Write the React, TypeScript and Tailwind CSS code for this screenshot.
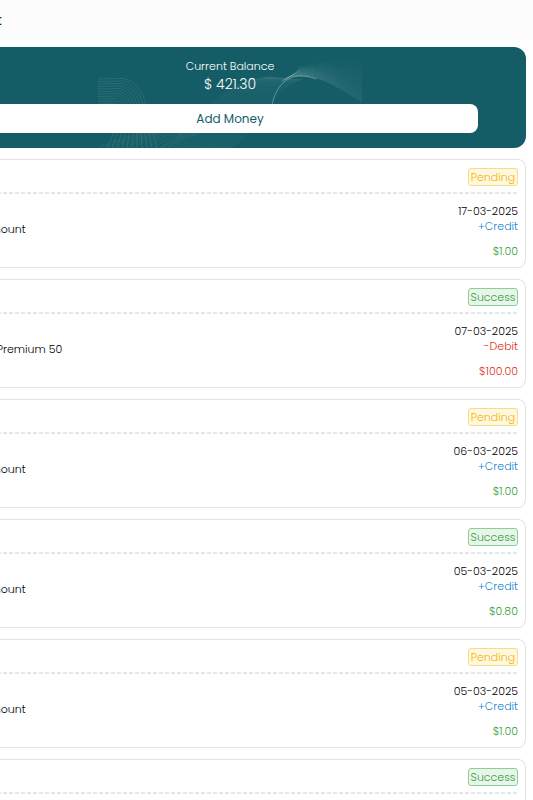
import clsx from 'clsx';

type Transaction = {
  id: number;
  title: string;
  status: 'Pending' | 'Success';
  date: string;
  type: 'Credit' | 'Debit';
  amount: string;
};

const transactions: Transaction[] = [
  { id: 1, title: 'Added Amount', status: 'Pending', date: '17-03-2025', type: 'Credit', amount: '$1.00' },
  { id: 2, title: 'Purchase Premium 50', status: 'Success', date: '07-03-2025', type: 'Debit', amount: '$100.00' },
  { id: 3, title: 'Added Amount', status: 'Pending', date: '06-03-2025', type: 'Credit', amount: '$1.00' },
  { id: 4, title: 'Added Amount', status: 'Success', date: '05-03-2025', type: 'Credit', amount: '$0.80' },
  { id: 5, title: 'Added Amount', status: 'Pending', date: '05-03-2025', type: 'Credit', amount: '$1.00' },
  { id: 6, title: 'Added Amount', status: 'Success', date: '05-03-2025', type: 'Credit', amount: '$1.00' },
];

// Thin line art behind the balance
function BalanceWaves() {
  const rings = Array.from({ length: 11 }, (_, i) => i);
  const lines = Array.from({ length: 24 }, (_, i) => i);

  return (
    <svg
      viewBox="0 0 264 101"
      className="pointer-events-none absolute inset-y-0 left-1/2 h-full w-[264px] -translate-x-1/2"
      fill="none"
      stroke="#ffffff"
      strokeWidth="0.5"
      aria-hidden="true"
    >
      {/* left loop */}
      {rings.map((i) => (
        <path
          key={`ring-${i}`}
          opacity="0.2"
          d={`M0 ${32 + i * 2.5} L${22 - i * 0.6} ${31.5 + i * 2.5} C${36 - i * 2} ${31 + i * 2.5} ${44 - i * 2.6} ${44 + i * 1.6} ${48 - i * 3} 58 C${52 - i * 3} 72 ${55 - i * 4} 88 ${59 - i * 5} 101`}
        />
      ))}
      {rings.map((i) => (
        <path key={`cross-${i}`} opacity="0.14" d={`M${i * 7} 101 C${16 + i * 6} 94 ${34 + i * 6} 88 ${50 + i * 6} 84`} />
      ))}
      {/* rising sheet, its right edge follows the crest */}
      {lines.map((i) => (
        <path
          key={`rise-${i}`}
          opacity="0.11"
          d={`M${60 + i * 3} 101 C${105 + i * 2.2} ${80 + i * 0.6} ${118 + i * 2.2} ${32 + i * 0.4} ${172 + i * 1.4} ${30 + i * 0.1}`}
        />
      ))}
      {/* crest and its fall to the right */}
      {lines.map((i) => (
        <path
          key={`fall-${i}`}
          opacity={0.2 - i * 0.007}
          d={`M${183 + i * 0.8} ${35 - i * 0.5} C${188 + i} ${30 - i * 0.4} 195 ${29 - i * 0.3} 202 ${29 - i * 0.4} C222 ${28 - i * 0.6} 244 ${42 - i * 1.2} 264 ${55 - i * 1.8}`}
        />
      ))}
      <path opacity="0.3" strokeWidth="1" d="M174 58 C177 42 187 29 202 29 C208 29 213 30 218 32" />
    </svg>
  );
}

function BalanceCard() {
  return (
    <section className="relative overflow-hidden rounded-xl bg-[#145d66] px-12 pt-[11px] pb-[15px] text-center text-white">
      <BalanceWaves />
      <div className="relative">
        <p className="text-[11px] leading-4">Current Balance</p>
        <p className="text-sm leading-5">$ 421.30</p>
        <button type="button" className="mt-[10px] h-[29px] w-full rounded-lg bg-white text-xs font-normal text-[#145d66]">
          Add Money
        </button>
      </div>
    </section>
  );
}

function TransactionCard({ transaction }: { transaction: Transaction }) {
  const { title, status, date, type, amount } = transaction;
  const isCredit = type === 'Credit';

  return (
    <li className="rounded-lg border border-[#e2e2e2] bg-white py-2 pr-[7px] pl-2 text-[11px]">
      <div className="flex justify-end pb-[6px]">
        <span
          className={clsx(
            'flex h-[18px] w-[50px] items-center justify-center rounded-[3px] border',
            status === 'Pending'
              ? 'border-[#f8dc83] bg-[#fff8e1] text-[#efb400]'
              : 'border-[#8fce92] bg-[#e8f5e9] text-[#36a03c]'
          )}
        >
          {status}
        </span>
      </div>
      <div className="h-[2px] bg-[repeating-linear-gradient(90deg,#e0e8e8_0_4px,transparent_4px_6px)]" />
      <div className="flex items-start justify-between pt-[10px]">
        <p className="pt-[18px] leading-[15px] text-black">{title}</p>
        <div className="text-right leading-[15px]">
          <p className="text-black">{date}</p>
          <p className={isCredit ? 'text-[#1585d0]' : 'text-[#e02f1d]'}>{isCredit ? '+Credit' : '-Debit'}</p>
          <p className={clsx('mt-[10px]', isCredit ? 'text-[#2f9e34]' : 'text-[#e02f1d]')}>{amount}</p>
        </div>
      </div>
    </li>
  );
}

export default function App() {
  return (
    <div className="h-screen overflow-hidden bg-white font-['Poppins','Inter',sans-serif] font-light">
      {/* the page is scrolled sideways, its left edge is out of view */}
      <div className="-ml-[73px]">
        <header className="flex h-10 items-center bg-[#fcfcfc] px-[30px]">
          <h1 className="text-sm font-medium text-[#222222]">Wallet</h1>
        </header>
        <main className="px-[7px] pt-[7px]">
          <BalanceCard />
          <ul className="mt-[11px] flex flex-col gap-[11px]">
            {transactions.map((transaction) => (
              <TransactionCard key={transaction.id} transaction={transaction} />
            ))}
          </ul>
        </main>
      </div>
    </div>
  );
}
